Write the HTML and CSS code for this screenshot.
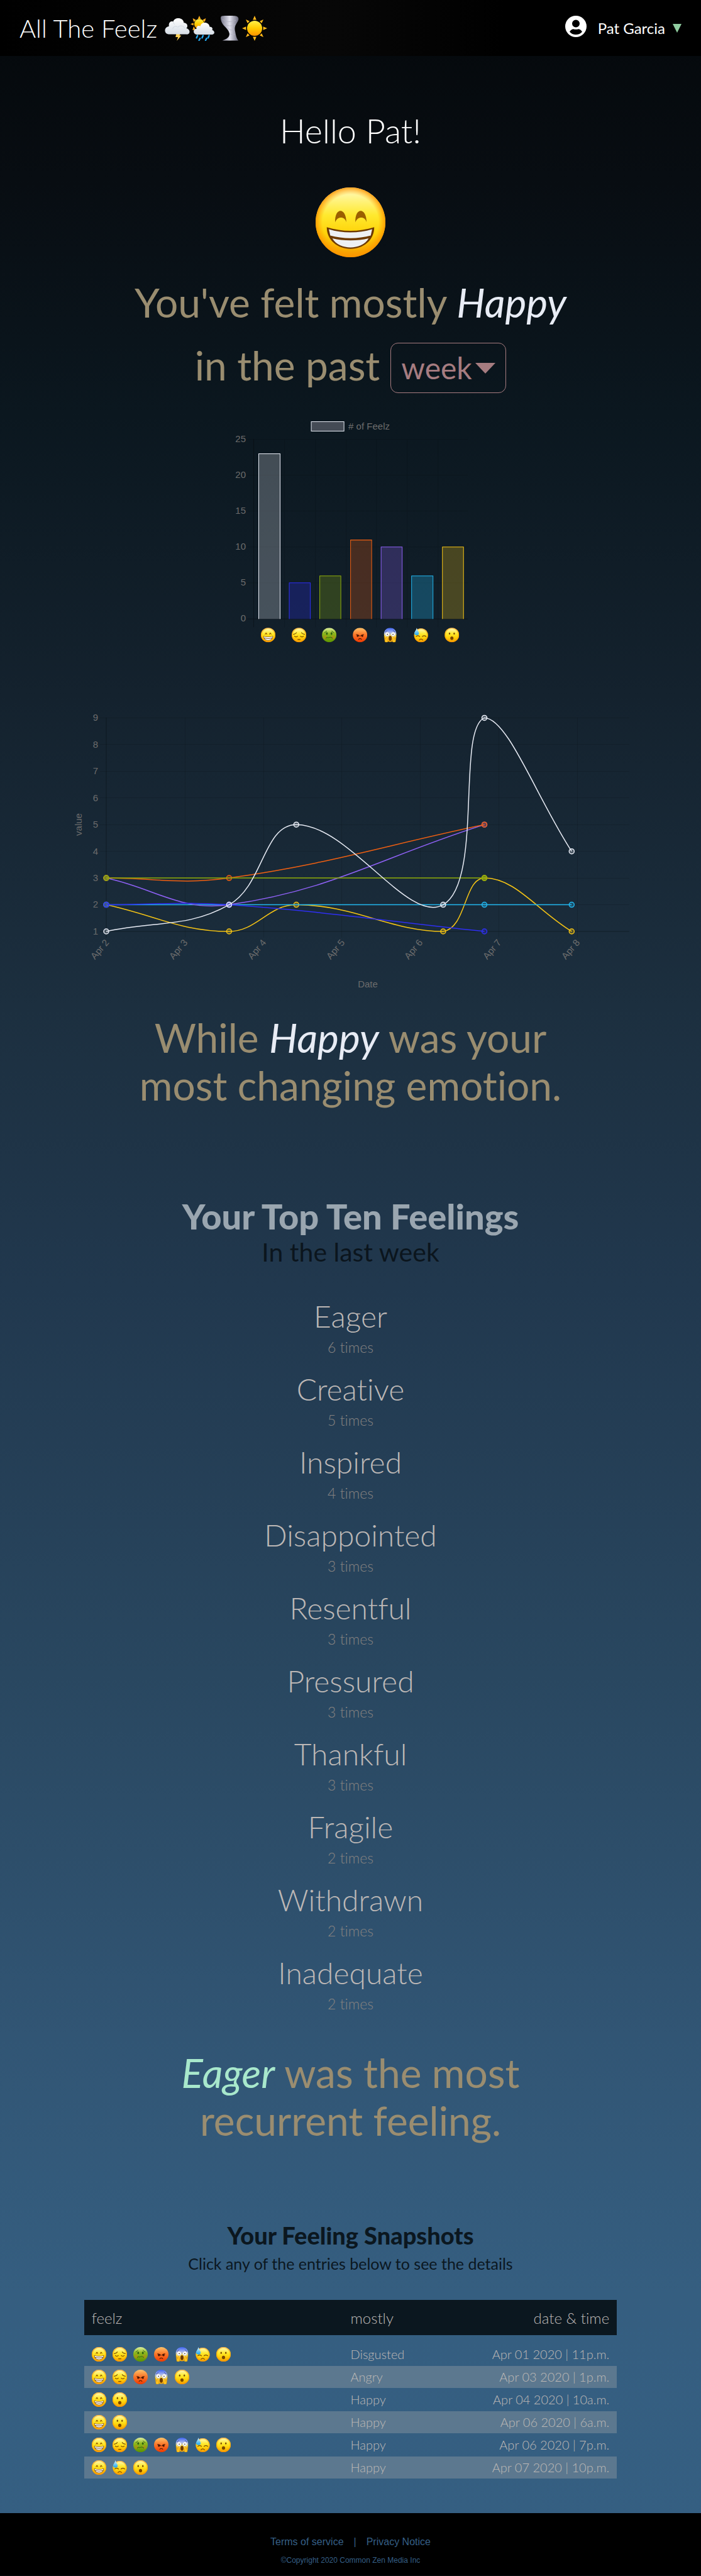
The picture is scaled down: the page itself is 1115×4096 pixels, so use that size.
FILE: index.html
```html
<!DOCTYPE html>
<html lang="en">
<head>
<meta charset="utf-8">
<meta name="viewport" content="width=device-width, initial-scale=1">
<title>All The Feelz</title>
<link rel="stylesheet" href="styles.css">
</head>
<body>
<svg class="sprite" width="0" height="0" aria-hidden="true">
  <defs>
    <linearGradient id="g-face" x1="0" y1="0" x2="0" y2="1"><stop offset="0" stop-color="#fffbc4"/><stop offset=".4" stop-color="#ffe92e"/><stop offset=".65" stop-color="#ffd30a"/><stop offset="1" stop-color="#f59a00"/></linearGradient>
    <radialGradient id="g-rim"><stop offset=".8" stop-color="#ff9d00" stop-opacity="0"/><stop offset="1" stop-color="#ff9300" stop-opacity=".85"/></radialGradient>
    <linearGradient id="g-sick" x1="0" y1="0" x2="0" y2="1"><stop offset="0" stop-color="#dff0a0"/><stop offset=".4" stop-color="#8fb81c"/><stop offset="1" stop-color="#5e9400"/></linearGradient>
    <linearGradient id="g-mad" x1="0" y1="0" x2="0" y2="1"><stop offset="0" stop-color="#ffc36a"/><stop offset=".45" stop-color="#fb7a2c"/><stop offset="1" stop-color="#ef3a00"/></linearGradient>
    <linearGradient id="g-fear" x1="0" y1="0" x2="0" y2="1"><stop offset="0" stop-color="#3d63f2"/><stop offset=".35" stop-color="#aebcf0"/><stop offset=".55" stop-color="#ffe35a"/><stop offset="1" stop-color="#f7a400"/></linearGradient>
    <linearGradient id="g-drop" x1="0" y1="0" x2="0" y2="1"><stop offset="0" stop-color="#dff6ff"/><stop offset="1" stop-color="#1ba4ea"/></linearGradient>
    <linearGradient id="g-sun" x1="0" y1="0" x2="0" y2="1"><stop offset="0" stop-color="#fff04a"/><stop offset=".5" stop-color="#ffcb00"/><stop offset="1" stop-color="#ff9200"/></linearGradient>
    <linearGradient id="g-cloud" x1="0" y1="0" x2="0" y2="1"><stop offset="0" stop-color="#ffffff"/><stop offset="1" stop-color="#d5dde6"/></linearGradient>
    <linearGradient id="g-twist"><stop offset="0" stop-color="#77778a"/><stop offset=".5" stop-color="#e2e2ee"/><stop offset="1" stop-color="#666678"/></linearGradient>
  </defs>
  <symbol id="happy" viewBox="0 0 100 100">
    <circle cx="50" cy="50" r="50" fill="url(#g-face)"/><circle cx="50" cy="50" r="50" fill="url(#g-rim)"/>
    <path d="M28 50C27 28 44 28 44 50C42 41 31 41 28 50ZM57 50C56 28 73 28 73 50C71 41 60 41 57 50Z" fill="#9a5f00"/>
    <path d="M16 57C38 64 62 64 84 57C84 76 68 88 50 88S16 76 16 57Z" fill="#6d3900"/>
    <path d="M19 60C38 66 62 66 81 60L79 69C62 74 38 74 21 69ZM24 73C40 77 60 77 76 73C71 82 60 86 50 86S29 82 24 73Z" fill="#eef0f3"/>
  </symbol>
  <symbol id="sad" viewBox="0 0 100 100">
    <circle cx="50" cy="50" r="50" fill="url(#g-face)"/><circle cx="50" cy="50" r="50" fill="url(#g-rim)"/>
    <g fill="none" stroke="#7a4700" stroke-width="5" stroke-linecap="round"><path d="M12 45Q27 43 33 34M88 45Q73 43 67 34M19 58Q29 68 40 58M60 58Q71 68 81 58M42 81H58"/></g>
  </symbol>
  <symbol id="sick" viewBox="0 0 100 100">
    <circle cx="50" cy="50" r="50" fill="url(#g-sick)"/><circle cx="22" cy="65" r="13" fill="#c08a1a" opacity=".55"/><circle cx="78" cy="65" r="13" fill="#c08a1a" opacity=".55"/>
    <ellipse cx="34" cy="40" rx="6" ry="9" fill="#2f6010"/><ellipse cx="66" cy="40" rx="6" ry="9" fill="#2f6010"/>
    <g fill="none" stroke="#2f6010" stroke-width="4" stroke-linecap="round"><path d="M18 34Q26 32 32 22M82 34Q74 32 68 22M28 73Q30 63 36 67T50 67T64 67Q70 63 72 73"/></g>
  </symbol>
  <symbol id="mad" viewBox="0 0 100 100">
    <circle cx="50" cy="50" r="50" fill="url(#g-mad)"/>
    <circle cx="34" cy="56" r="7" fill="#4b1500"/><circle cx="66" cy="56" r="7" fill="#4b1500"/>
    <g fill="none" stroke="#4b1500" stroke-width="5" stroke-linecap="round"><path d="M25 47Q36 47 46 56M75 47Q64 47 54 56M40 80Q50 70 60 80"/></g>
  </symbol>
  <symbol id="fear" viewBox="0 0 100 100">
    <path d="M50 0C80 0 96 24 92 52C89 76 70 98 50 98S11 76 8 52C4 24 20 0 50 0Z" fill="url(#g-fear)"/>
    <circle cx="30" cy="44" r="15" fill="#fff" stroke="#8d93b8" stroke-width="2"/><circle cx="70" cy="44" r="15" fill="#fff" stroke="#8d93b8" stroke-width="2"/>
    <circle cx="31" cy="45" r="4" fill="#4b3a20"/><circle cx="69" cy="45" r="4" fill="#4b3a20"/>
    <path d="M14 30Q24 26 30 18M86 30Q76 26 70 18" fill="none" stroke="#394a96" stroke-width="4"/>
    <ellipse cx="50" cy="73" rx="11" ry="17" fill="#6d3900"/>
    <path d="M8 58L20 82V66Q27 60 31 70L34 98Q24 104 14 98ZM92 58L80 82V66Q73 60 69 70L66 98Q76 104 86 98Z" fill="#ffc41f" stroke="#d98c00" stroke-width="2"/>
  </symbol>
  <symbol id="sweat" viewBox="0 0 100 100">
    <circle cx="50" cy="52" r="48" fill="url(#g-face)"/><circle cx="50" cy="52" r="48" fill="url(#g-rim)"/>
    <g fill="none" stroke="#7a4700" stroke-width="5" stroke-linecap="round"><path d="M16 60Q28 50 41 60M59 60Q72 50 84 60M38 84Q50 72 62 84"/></g>
    <path d="M20 0C25 17 36 28 36 38A16 13 0 0 1 4 38C4 28 16 17 20 0Z" fill="url(#g-drop)"/>
  </symbol>
  <symbol id="wow" viewBox="0 0 100 100">
    <circle cx="50" cy="50" r="50" fill="url(#g-face)"/><circle cx="50" cy="50" r="50" fill="url(#g-rim)"/>
    <ellipse cx="34" cy="40" rx="5" ry="7" fill="#7a4700"/><ellipse cx="66" cy="40" rx="5" ry="7" fill="#7a4700"/><ellipse cx="50" cy="72" rx="11" ry="12" fill="#7a4700"/>
  </symbol>
  <symbol id="storm" viewBox="0 0 100 100">
    <path d="M46 72L62 72L59 79L66 79L48 100L53 85L43 85Z" fill="#ffd35a"/>
    <path d="M16 74C-4 72-4 46 17 42C14 26 26 20 34 24C36 6 74 4 76 28C90 28 94 42 86 50C104 54 102 76 86 74Z" fill="url(#g-cloud)"/>
    <path d="M32 52C34 40 48 40 52 46C60 36 76 40 80 50M34 24C34 30 37 33 40 34" fill="none" stroke="#c9d2dd" stroke-width="2"/>
  </symbol>
  <symbol id="shower" viewBox="0 0 100 100">
    <path d="M35 0L41 13H29ZM9 10L22 17L13 25ZM61 10L57 25L48 17ZM0 33L12 28V39ZM8 57L13 42L20 56Z" fill="#ffae1a"/><circle cx="35" cy="33" r="20" fill="url(#g-sun)"/>
    <path d="M24 75C8 72 10 52 24 52C23 40 34 38 39 42C42 22 74 22 76 44C86 44 90 52 86 57C100 62 96 76 84 75Z" fill="url(#g-cloud)"/>
    <path d="M28 79L24 88M50 79L46 88M74 79L70 88M38 90L34 98M64 90L60 98" stroke="#23a8ee" stroke-width="6" stroke-linecap="round"/>
  </symbol>
  <symbol id="tornado" viewBox="0 0 100 100">
    <path d="M22 1C40-1 68-1 80 2C92 6 90 18 82 28C74 40 72 50 75 62C78 78 80 90 88 99H24C44 92 54 84 52 70C48 50 26 42 20 22C17 12 16 4 22 1Z" fill="url(#g-twist)"/>
    <path d="M24 14Q46 32 78 18M30 32Q56 48 76 34M46 50Q62 62 72 54M54 72Q64 78 74 74" fill="none" stroke="#b4b4c4" stroke-width="2"/>
  </symbol>
  <symbol id="sun" viewBox="0 0 100 100">
    <path d="M50 0L57 16H43ZM50 100L43 84H57ZM0 50L16 43V57ZM100 50L84 57V43ZM15 15L30 22L22 30ZM85 15L78 30L70 22ZM15 85L22 70L30 78ZM85 85L70 78L78 70Z" fill="#ffb81a"/><circle cx="50" cy="50" r="30" fill="url(#g-sun)"/>
  </symbol>
</svg>

<header class="topbar">
  <a class="brand" href="#">All The Feelz
    <span class="weather">
      <svg><use href="#storm"/></svg><svg><use href="#shower"/></svg><svg><use href="#tornado"/></svg><svg><use href="#sun"/></svg>
    </span>
  </a>
  <button class="account" type="button">
    <svg class="avatar" viewBox="0 0 34 34"><path fill-rule="evenodd" fill="#fff" d="M17 0A17 17 0 1 0 17 34A17 17 0 1 0 17 0ZM17 6.500A6 6 0 1 1 17 18.500A6 6 0 1 1 17 6.500ZM17 30C13 30 9.500 28.500 7 25.500C9 22.500 11 21.300 13 21.300Q17 22.300 21 21.300C23 21.300 25 22.500 27 25.500C24.500 28.500 21 30 17 30Z"/></svg>
    <span>Pat Garcia</span>
    <span class="caret"></span>
  </button>
</header>

<main>
  <h1 class="hello">Hello Pat!</h1>
  <svg class="mood" role="img" aria-label="Happy"><use href="#happy"/></svg>

  <div class="summary">
    <p class="statement tall">You've felt mostly <em>Happy</em></p>
    <div class="period">
      <label class="statement" for="period">in the past</label>
      <span class="picker">
        <select id="period"><option>week</option><option>month</option><option>year</option></select>
        <span class="arrow"></span>
      </span>
    </div>
  </div>

  <svg class="chart bars" viewBox="0 0 390 368" role="img" aria-label="Number of Feelz">
    <g class="grid"><path d="M31 36.500H382M31 93.500H382M31 150.500H382M31 207.500H382M31 264.500H382M90.500 36V335M139.500 36V335M188.500 36V335M236.500 36V335M285.500 36V335M334.500 36V335"/><path class="axis" d="M41.500 36V335M31 322H382"/></g>
    <rect x="133" y="8.500" width="52" height="15" fill="#444b55" stroke="#e8ecf5"/>
    <text x="192" y="21"># of Feelz</text>
    <g text-anchor="end"><text x="29" y="41">25</text><text x="29" y="98">20</text><text x="29" y="155">15</text><text x="29" y="212">10</text><text x="29" y="269">5</text><text x="29" y="326">0</text></g>
    <g class="columns">
      <path d="M49.500 322V59.500H83.500V322" fill="#e8ecf540" stroke="#e8ecf5"/>
      <path d="M98 322V264.500H131.500V322" fill="#2b2bf240" stroke="#2f2ff5"/>
      <path d="M146.500 322V253.500H180V322" fill="#8fae0a40" stroke="#8fae0a"/>
      <path d="M195.500 322V196.500H229V322" fill="#ee5f1240" stroke="#ee5f12"/>
      <path d="M244 322V207.500H277.500V322" fill="#9062f840" stroke="#9062f8"/>
      <path d="M292.500 322V253.500H326.500V322" fill="#22b6ee48" stroke="#22b6ee"/>
      <path d="M341.500 322V207.500H375V322" fill="#f5c41540" stroke="#f5c415"/>
    </g>
    <g><use href="#happy" x="53" y="336" width="23" height="23"/><use href="#sad" x="102" y="336" width="23" height="23"/><use href="#sick" x="150" y="336" width="23" height="23"/><use href="#mad" x="199" y="336" width="23" height="23"/><use href="#fear" x="247" y="336" width="23" height="23"/><use href="#sweat" x="296" y="336" width="23" height="23"/><use href="#wow" x="345" y="336" width="23" height="23"/></g>
  </svg>

  <svg class="chart lines" viewBox="0 0 892 460" role="img" aria-label="Feelz by date">
    <g class="grid"><path d="M47 21.500H889M47 63.500H889M47 106.500H889M47 148.500H889M47 191.500H889M47 233.500H889M47 276.500H889M47 318.500H889M182.500 21V371M307.500 21V371M431.500 21V371M556.500 21V371M681.500 21V371M806.500 21V371"/><path class="axis" d="M57 21V371M47 361H889"/></g>
    <g text-anchor="end"><text x="44" y="26">9</text><text x="44" y="69">8</text><text x="44" y="111">7</text><text x="44" y="154">6</text><text x="44" y="196">5</text><text x="44" y="239">4</text><text x="44" y="281">3</text><text x="44" y="323">2</text><text x="44" y="366">1</text></g>
    <g text-anchor="end">
      <text transform="translate(62 379) rotate(-50)">Apr 2</text><text transform="translate(187 379) rotate(-50)">Apr 3</text><text transform="translate(312 379) rotate(-50)">Apr 4</text><text transform="translate(437 379) rotate(-50)">Apr 5</text><text transform="translate(561 379) rotate(-50)">Apr 6</text><text transform="translate(686 379) rotate(-50)">Apr 7</text><text transform="translate(811 379) rotate(-50)">Apr 8</text>
    </g>
    <text text-anchor="middle" transform="translate(18 191) rotate(-90)">value</text>
    <text text-anchor="middle" x="473" y="450">Date</text>
    <g class="series" stroke="#f5c415" fill="#f5c41540"><path d="M57 318.600C135.200 335.600 175.600 361 252.400 361C296.500 361 314.900 318.600 359.300 318.600C451.100 318.600 510.500 361 592.900 361C630.200 355.700 626 276.100 658.500 276.100C707.800 276.100 741.800 327 797.300 361"/><circle cx="57" cy="318.600" r="4"/><circle cx="252.400" cy="361" r="4"/><circle cx="359.300" cy="318.600" r="4"/><circle cx="592.900" cy="361" r="4"/><circle cx="658.500" cy="276.100" r="4"/><circle cx="797.300" cy="361" r="4"/></g>
    <g class="series" stroke="#22b6ee" fill="#22b6ee40"><path d="M57 318.600H797.300"/><circle cx="57" cy="318.600" r="4"/><circle cx="658.500" cy="318.600" r="4"/><circle cx="797.300" cy="318.600" r="4"/></g>
    <g class="series" stroke="#9062f8" fill="#9062f840"><path d="M57 276.100C135.200 293.100 175.500 329.500 252.400 318.600C416.100 295.500 496.100 242.200 658.500 191.200"/><circle cx="57" cy="276.100" r="4"/><circle cx="252.400" cy="318.600" r="4"/><circle cx="658.500" cy="191.200" r="4"/></g>
    <g class="series" stroke="#ee5f12" fill="#ee5f1240"><path d="M57 276.100C135.200 276.100 175.400 287 252.400 276.100C416 253 496.100 225.200 658.500 191.200"/><circle cx="57" cy="276.100" r="4"/><circle cx="252.400" cy="276.100" r="4"/><circle cx="658.500" cy="191.200" r="4"/></g>
    <g class="series" stroke="#8fae0a" fill="#8fae0a90"><path d="M57 276.100H658.500"/><circle cx="57" cy="276.100" r="4"/><circle cx="658.500" cy="276.100" r="4"/></g>
    <g class="series" stroke="#2f2ff5" fill="#2f2ff540"><path d="M57 318.600C135.200 318.600 174.500 313.100 252.400 318.600C415.100 330.100 496.100 344 658.500 361"/><circle cx="57" cy="318.600" r="4"/><circle cx="252.400" cy="318.600" r="4"/><circle cx="658.500" cy="361" r="4"/></g>
    <g class="series" stroke="#e8ecf5" fill="#e8ecf540"><path d="M57 361C135.200 344 186.400 355.700 252.400 318.600C307.300 287.800 306.900 191.200 359.300 191.200C443.100 191.200 537.100 350.300 592.900 318.600C656.800 282.400 613.900 39.900 658.500 21.400C695.700 21.400 741.800 148.800 797.300 233.700"/><circle cx="57" cy="361" r="4"/><circle cx="252.400" cy="318.600" r="4"/><circle cx="359.300" cy="191.200" r="4"/><circle cx="592.900" cy="318.600" r="4"/><circle cx="658.500" cy="21.400" r="4"/><circle cx="797.300" cy="233.700" r="4"/></g>
  </svg>

  <p class="statement changing">While <em>Happy</em> was your<br>most changing emotion.</p>

  <section class="topten">
    <h2>Your Top Ten Feelings</h2>
    <p class="sub">In the last week</p>
    <ol>
      <li><strong>Eager</strong><span>6 times</span></li>
      <li><strong>Creative</strong><span>5 times</span></li>
      <li><strong>Inspired</strong><span>4 times</span></li>
      <li><strong>Disappointed</strong><span>3 times</span></li>
      <li><strong>Resentful</strong><span>3 times</span></li>
      <li><strong>Pressured</strong><span>3 times</span></li>
      <li><strong>Thankful</strong><span>3 times</span></li>
      <li><strong>Fragile</strong><span>2 times</span></li>
      <li><strong>Withdrawn</strong><span>2 times</span></li>
      <li><strong>Inadequate</strong><span>2 times</span></li>
    </ol>
  </section>

  <p class="statement recurrent"><em>Eager</em> was the most<br>recurrent feeling.</p>

  <section class="snapshots">
    <h2>Your Feeling Snapshots</h2>
    <p class="hint">Click any of the entries below to see the details</p>
    <table>
      <thead><tr><th>feelz</th><th>mostly</th><th>date &amp; time</th></tr></thead>
      <tbody>
        <tr><td><div class="faces"><svg><use href="#happy"/></svg><svg><use href="#sad"/></svg><svg><use href="#sick"/></svg><svg><use href="#mad"/></svg><svg><use href="#fear"/></svg><svg><use href="#sweat"/></svg><svg><use href="#wow"/></svg></div></td><td>Disgusted</td><td>Apr 01 2020 | 11p.m.</td></tr>
        <tr><td><div class="faces"><svg><use href="#happy"/></svg><svg><use href="#sad"/></svg><svg><use href="#mad"/></svg><svg><use href="#fear"/></svg><svg><use href="#wow"/></svg></div></td><td>Angry</td><td>Apr 03 2020 | 1p.m.</td></tr>
        <tr><td><div class="faces"><svg><use href="#happy"/></svg><svg><use href="#wow"/></svg></div></td><td>Happy</td><td>Apr 04 2020 | 10a.m.</td></tr>
        <tr><td><div class="faces"><svg><use href="#happy"/></svg><svg><use href="#wow"/></svg></div></td><td>Happy</td><td>Apr 06 2020 | 6a.m.</td></tr>
        <tr><td><div class="faces"><svg><use href="#happy"/></svg><svg><use href="#sad"/></svg><svg><use href="#sick"/></svg><svg><use href="#mad"/></svg><svg><use href="#fear"/></svg><svg><use href="#sweat"/></svg><svg><use href="#wow"/></svg></div></td><td>Happy</td><td>Apr 06 2020 | 7p.m.</td></tr>
        <tr><td><div class="faces"><svg><use href="#happy"/></svg><svg><use href="#sweat"/></svg><svg><use href="#wow"/></svg></div></td><td>Happy</td><td>Apr 07 2020 | 10p.m.</td></tr>
      </tbody>
    </table>
  </section>
</main>

<footer>
  <nav><a href="#">Terms of service</a><span>|</span><a href="#">Privacy Notice</a></nav>
  <p>©Copyright 2020 Common Zen Media Inc</p>
</footer>
</body>
</html>
```
FILE: styles.css
```css
* { box-sizing: border-box; }

body {
  margin: 0;
  font-family: Lato, "Open Sans", sans-serif;
  font-variant-ligatures: none;
  color: #bdb8b6;
  background: linear-gradient(#04080b 0%, #080d12 7%, #0b171f 16%, #14222e 27%, #1c2f3f 39%, #21384e 50%, #294760 65%, #315574 79%, #355e80 89%, #355f82 100%);
}

h1, h2, p, ol { margin: 0; padding: 0; }
a { color: inherit; text-decoration: none; }
.sprite { display: block; width: 0; height: 0; }

/* Top bar */
.topbar {
  display: flex;
  justify-content: space-between;
  align-items: center;
  height: 89px;
  padding: 0 31px;
  background: linear-gradient(90deg, #000 0%, #070707 48%, #000 72%);
}
.brand {
  display: flex;
  align-items: center;
  gap: 12px;
  color: #fff;
  font-size: 40px;
  line-height: 48px;
  font-weight: 300;
}
.weather { display: flex; gap: 1px; }
.weather svg { width: 40px; height: 40px; }
.account {
  display: flex;
  align-items: center;
  gap: 12px;
  padding: 0;
  border: 0;
  background: none;
  color: #fff;
  font: 400 24px/30px Lato, sans-serif;
}
.avatar { width: 34px; height: 34px; margin: 0 6px 6px 0; }
.caret {
  border: 7px solid transparent;
  border-top: 14px solid #90cda0;
  border-bottom: 0;
}

/* Greeting and summary */
main { display: flow-root; text-align: center; }
.hello {
  margin-top: 89px;
  color: #fff;
  font-size: 54px;
  line-height: 60px;
  font-weight: 300;
}
.mood { display: block; width: 111px; height: 111px; margin: 60px auto 32px; }
.statement {
  color: #9a8d70;
  font-size: 64px;
  line-height: 76px;
  font-weight: 400;
}
.statement em { color: #e8ecf5; }
.tall { line-height: 80px; }
.period {
  display: flex;
  justify-content: center;
  align-items: flex-start;
  gap: 17px;
  margin-top: 24px;
}
.period .statement { line-height: 72px; }
.picker {
  display: flex;
  align-items: center;
  height: 80px;
  padding: 0 16px;
  gap: 4px;
  border: 1px solid #a67c80;
  border-radius: 12px;
}
.picker select {
  appearance: none;
  width: 114px;
  padding: 0;
  border: 0;
  background: none;
  color: #a67c80;
  font: 400 48px/76px Lato, sans-serif;
}
.arrow {
  border: 16px solid transparent;
  border-top: 17px solid #a67c80;
  border-bottom: 0;
}

/* Charts */
.chart {
  display: block;
  margin: 0 auto;
  font-family: "Liberation Sans", Arial, sans-serif;
  font-size: 15px;
}
.chart text { fill: #6c6c6c; }
.bars { width: 35%; margin-top: 37px; }
.lines { width: 80%; margin-top: 90px; }
.grid { fill: none; stroke: #00000020; stroke-width: 1; }
.grid .axis { stroke: #00000050; }
.columns { stroke-width: 1; }
.series { stroke-width: 1.5; }
.series path { fill: none; }

.changing { margin-top: 32px; }

/* Top ten */
.topten h2 {
  margin-top: 140px;
  color: #9aa6b0;
  font-size: 56px;
  line-height: 60px;
  font-weight: 900;
}
.sub {
  margin-top: 4px;
  color: #0b151d;
  font-size: 41px;
  line-height: 46px;
}
.topten ol {
  display: grid;
  gap: 24px;
  margin-top: 51px;
  list-style: none;
}
.topten li { display: grid; gap: 6px; }
.topten strong { font-size: 48px; line-height: 56px; font-weight: 300; }
.topten span { color: #858281; font-size: 23px; line-height: 30px; font-weight: 300; }

.recurrent { margin-top: 57px; }
.recurrent em { color: #a8e8cc; }

/* Snapshots */
.snapshots h2 {
  margin-top: 122px;
  color: #0b171f;
  font-size: 38px;
  line-height: 44px;
  font-weight: 900;
}
.hint { margin-top: 8px; color: #0b171f; font-size: 25px; line-height: 30px; }
table {
  width: 76%;
  margin: 42px auto 54px;
  table-layout: fixed;
  border-spacing: 0 1px;
  text-align: left;
  font-size: 20px;
  line-height: 35px;
  font-weight: 300;
}
th {
  height: 68px;
  padding: 0;
  border-bottom: 12px solid transparent;
  background: #0b171f;
  background-clip: padding-box;
  font-size: 24px;
  font-weight: 300;
}
td { height: 35px; padding: 0; }
th:first-child, td:first-child { width: 50%; padding-left: 12px; }
th:last-child, td:last-child { width: 28%; padding-right: 12px; text-align: right; }
tbody tr:nth-child(even) { background: #5c788f; }
.faces { display: flex; gap: 10px; }
.faces svg { width: 23px; height: 23px; }

/* Footer */
footer {
  padding: 36px 0 16px;
  background: #000;
  color: #355f86;
  text-align: center;
  font-family: "Liberation Sans", Arial, sans-serif;
}
footer nav { display: flex; justify-content: center; gap: 16px; font-size: 16px; line-height: 20px; }
footer p { margin-top: 11px; font-size: 12px; line-height: 16px; }
```
